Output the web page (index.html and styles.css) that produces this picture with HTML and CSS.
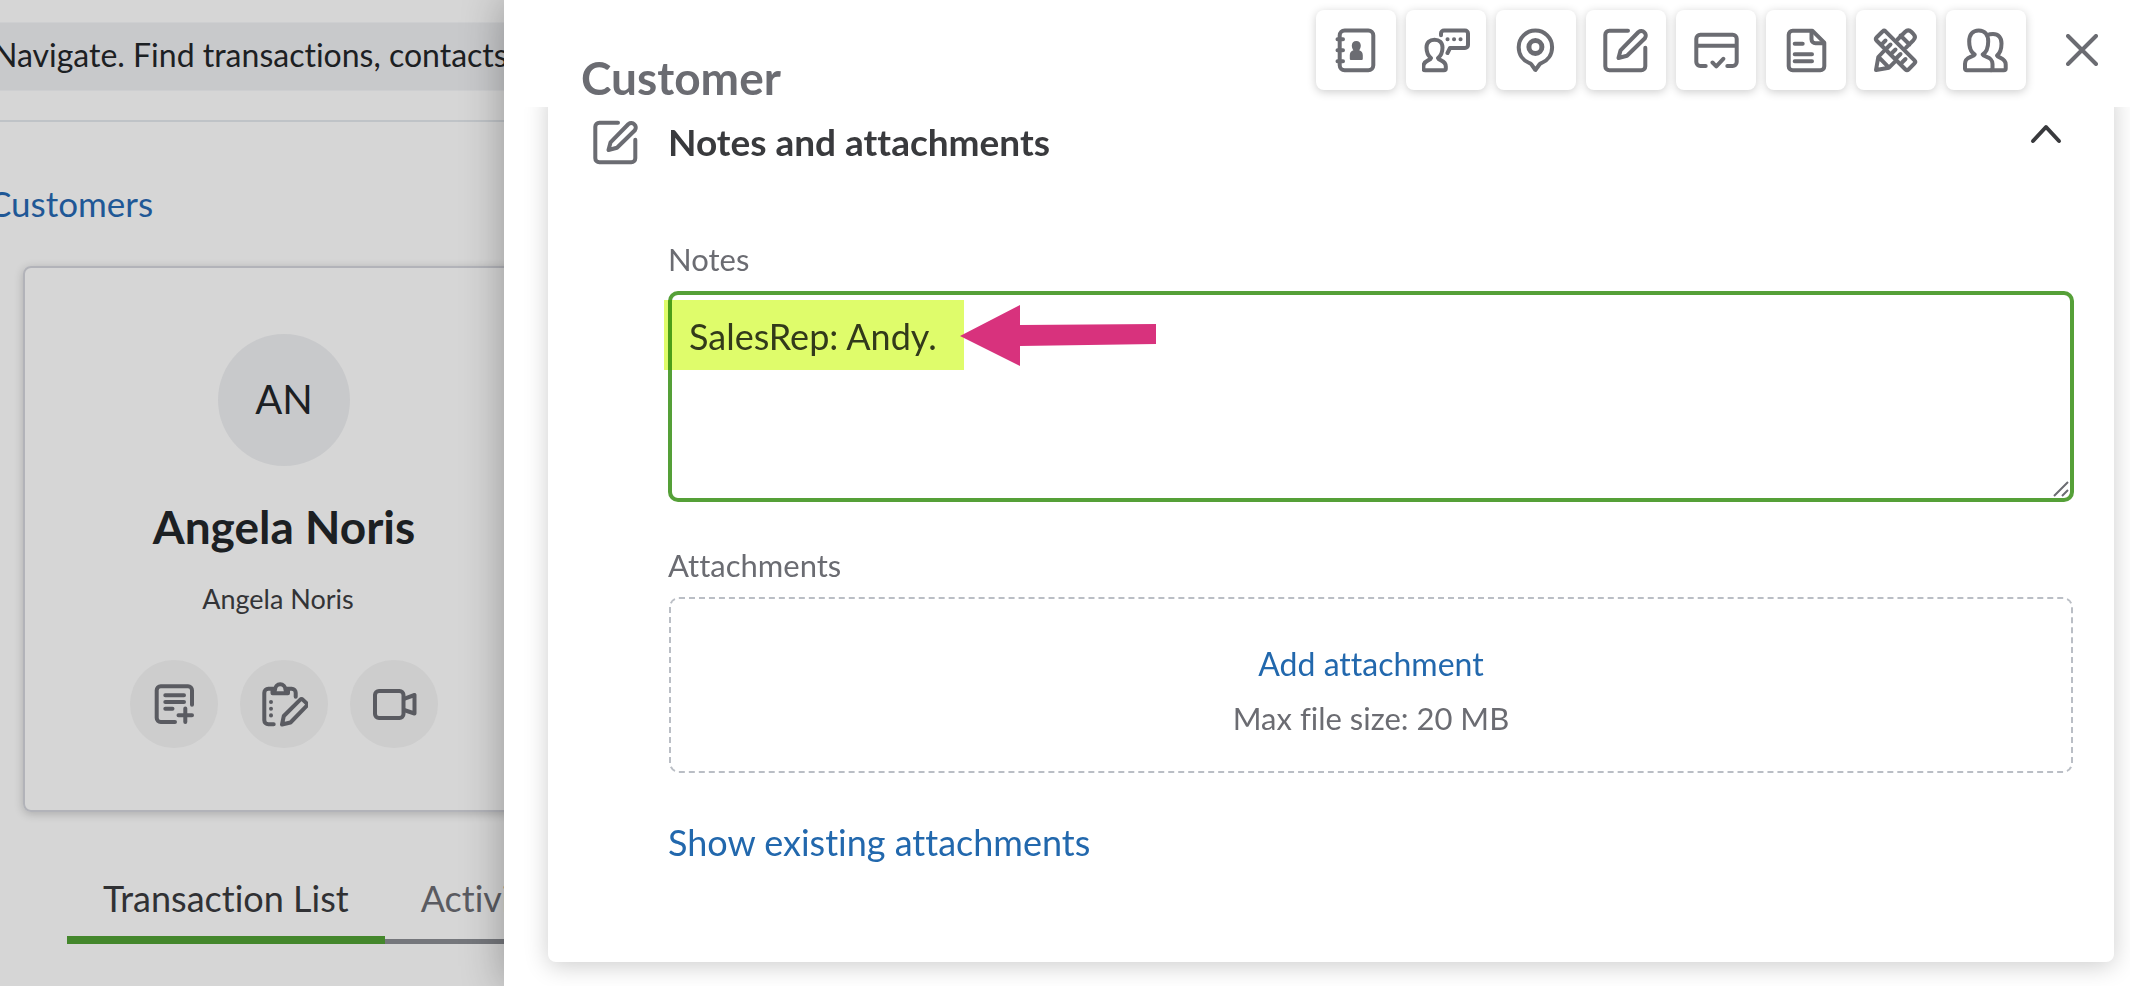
FILE: index.html
```html
<!DOCTYPE html>
<html lang="en">
<head>
    <meta charset="UTF-8">
    <meta name="viewport" content="width=device-width, initial-scale=1.0">
    <title>Customer</title>
    <link rel="stylesheet" href="styles.css">
</head>
<body>
    <!-- shared icons -->
    <svg class="sprite" aria-hidden="true">
        <symbol id="icon-edit" viewBox="0 0 48 48">
            <path d="M26 4.700H7.300a4 4 0 0 0-4 4v31.600a4 4 0 0 0 4 4h32a4 4 0 0 0 4-4V21.700"/>
            <path d="M16.500 32l2-7.600L36.500 6a4.500 4.500 0 0 1 6.400 6.200L25 29.700z"/>
        </symbol>
    </svg>

    <div class="app">
        <header class="topbar">
            <input class="search" type="search" aria-label="Search" placeholder="Navigate. Find transactions, contacts, help, reports">
        </header>

        <a class="breadcrumb" href="#">Customers</a>

        <section class="profile">
            <div class="avatar">AN</div>
            <h1 class="profile-name">Angela Noris</h1>
            <p class="profile-company">Angela Noris</p>
            <div class="profile-actions">
                <button class="round-btn" aria-label="Add note">
                    <svg class="icon" viewBox="0 0 48 48">
                        <path d="M42 24.700V10.300a4 4 0 0 0-4-4H10.700a4 4 0 0 0-4 4V38a4 4 0 0 0 4 4H25"/>
                        <path d="M15.300 15.300H34M15.300 22H34M15.300 28.700h7.200M35.300 28.500V42M28.500 35.300H42"/>
                    </svg>
                </button>
                <button class="round-btn" aria-label="Edit tasks">
                    <svg class="icon" viewBox="0 0 48 48">
                        <path d="M13.700 44.300H8.300a4 4 0 0 1-4-4V12.700a4 4 0 0 1 4-4H13M27 8.700h4.700a4 4 0 0 1 4 4v4"/>
                        <path d="M12.500 13.300H28V10h-2.500c0-3.500-2.500-5.800-5.300-5.800S15 6.500 15 10h-2.500z"/>
                        <path d="M11 22v.1M11 28.700v.1M11 35.300v.1"/>
                        <path d="M22 44.500l1.800-8.500 16.200-16.200c1-1 2-1 3 0l3.400 3.400c1 1 1 2 0 3L30.500 42.500z"/>
                    </svg>
                </button>
                <button class="round-btn" aria-label="Video call">
                    <svg class="icon" viewBox="0 0 48 48">
                        <rect x="5" y="11" width="28.500" height="27" rx="4"/>
                        <path d="M34 18.800l10.500-3.800v18.500L34 30"/>
                    </svg>
                </button>
            </div>
        </section>

        <nav class="tabs">
            <button class="tab active">Transaction List</button>
            <button class="tab">Activity Feed</button>
        </nav>
    </div>

    <aside class="drawer">
        <header class="drawer-header">
            <h2 class="drawer-title">Customer</h2>
            <div class="toolbar">
                <button class="tool" aria-label="Name and contact">
                    <svg class="icon" viewBox="0 0 48 48">
                        <rect x="7.700" y="4.500" width="33.600" height="39.800" rx="5"/>
                        <path d="M5.500 13.300h5.500M5.500 24.300h5.500M5.500 35.300h5.500"/>
                        <path class="solid" d="M24.300 15c2.800 0 4.500 1.900 4.500 4.600 0 1.800-.6 3.500-1.600 4.600 2.300.6 3.600 2.300 3.600 5v3.300c0 1-.5 1.500-1.500 1.500h-10c-1 0-1.500-.5-1.500-1.500v-3.300c0-2.700 1.300-4.400 3.600-5-1-1.100-1.600-2.800-1.600-4.600 0-2.700 1.700-4.600 4.500-4.600z"/>
                    </svg>
                </button>
                <button class="tool" aria-label="Communication">
                    <svg class="icon" viewBox="0 0 48 48">
                        <path d="M9 32c-3.400-2.600-4.500-6-4.500-10.500 0-5 3.200-7.800 8-7.800s8 2.800 8 7.800c0 4.500-1.100 7.900-4.500 10.500 1 3 7.800 2.200 7.800 8.500v2c0 1.200-.6 1.800-1.800 1.800H3.200c-1.200 0-1.800-.6-1.800-1.800v-2C1.400 34.200 8 35 9 32z"/>
                        <path d="M19 9.300V7.500a3 3 0 0 1 3-3h21a3 3 0 0 1 3 3V19a3 3 0 0 1-3 3H28l-2.500 5"/>
                        <path d="M25.500 13.300h.1M32 13.300h.1M38.500 13.300h.1"/>
                    </svg>
                </button>
                <button class="tool" aria-label="Addresses">
                    <svg class="icon" viewBox="0 0 48 48">
                        <path d="M23.400 44l-4.200-5.800c-.6-.8-1.200-.9-2-1.200C11 34.500 6.700 28.500 6.700 21.200a16.700 16.700 0 0 1 33.400 0c0 7.300-4.300 13.300-10.500 15.800-.8.300-1.400.4-2 1.200z"/>
                        <circle class="bold" cx="23.400" cy="21" r="6.500"/>
                    </svg>
                </button>
                <button class="tool" aria-label="Notes and attachments">
                    <svg class="icon"><use href="#icon-edit"/></svg>
                </button>
                <button class="tool" aria-label="Payments">
                    <svg class="icon" viewBox="0 0 48 48">
                        <path d="M13.700 40H8.300a4 4 0 0 1-4-4V12.700a4 4 0 0 1 4-4h32.400a4 4 0 0 1 4 4V36a4 4 0 0 1-4 4h-5.400M5 19.700h39"/>
                        <path d="M20.500 36.500l3.800 3.800 7-7.500"/>
                    </svg>
                </button>
                <button class="tool" aria-label="Additional info">
                    <svg class="icon" viewBox="0 0 48 48">
                        <path d="M30.300 4.700H10.700a4 4 0 0 0-4 4v31.600a4 4 0 0 0 4 4h27.600a4 4 0 0 0 4-4V16.700z"/>
                        <path d="M29.500 5v8.300a4 4 0 0 0 4 4h8.500M12.700 17.700h8M12.700 28.300H30M12.700 35.300H30"/>
                    </svg>
                </button>
                <button class="tool" aria-label="Custom fields">
                    <svg class="icon" viewBox="0 0 48 48">
                        <path d="M10.800 5.300l-6.300 6.200c-1 1-1 2 0 3l29 29c1 1 2 1 3 0l6-6.200c1-1 1-2 0-3l-29-29c-1-.9-1.800-.9-2.700 0z"/>
                        <path d="M13.500 14.500l-3.300 3.300M18.500 18.500l-4.500 4.500M23.500 23.500L20 27M28.500 28l-4.500 4.500M33.500 33L30 36.500"/>
                        <path d="M25.500 13.500L33 6c2-1.900 4.500-1.900 6.500 0l1.800 1.800c2 2 2 4.500 0 6.500L34 21.700M28.500 9.500l9 9M11.500 25.500L6.300 31 4 44l13-2.300 5.500-5.500M7 31.500l9.300 9.300"/>
                    </svg>
                </button>
                <button class="tool" aria-label="Sub-customers">
                    <svg class="icon" viewBox="0 0 48 48">
                        <path d="M12.700 28.500c-4-2.500-5.500-6.500-5.500-13 0-7 3.500-11 9.500-11s9.500 4 9.500 11c0 6.500-1.500 10.500-5.500 13 1 3 9.800 1.500 9.800 9.500v4.500c0 1.200-.6 1.800-1.800 1.800H4.800c-1.200 0-1.800-.6-1.800-1.800V38c0-8 8.700-6.500 9.700-9.500z"/>
                        <path d="M25.500 9c1.500-.7 3.500-1 5.500-1 5.500 0 8.500 3.500 8.500 9.500 0 6-1.300 9.500-4.500 12 1 2.700 8.700 2.200 8.700 9v4c0 1.200-.6 1.800-1.800 1.800H29"/>
                    </svg>
                </button>
            </div>
            <button class="close" aria-label="Close">
                <svg class="icon-small" viewBox="0 0 32 32"><path d="M2 2l28 28M30 2L2 30"/></svg>
            </button>
        </header>

        <div class="drawer-body">
            <section class="card">
                <div class="card-header">
                    <svg class="icon"><use href="#icon-edit"/></svg>
                    <h3 class="card-title">Notes and attachments</h3>
                    <button class="collapse" aria-label="Collapse section">
                        <svg class="icon-small" viewBox="0 0 32 32"><path d="M3 23L16 9l13 14"/></svg>
                    </button>
                </div>

                <div class="card-content">
                    <label class="label" for="notes">Notes</label>
                    <div class="notes-wrap">
                        <textarea class="notes" id="notes" spellcheck="false">SalesRep: Andy.</textarea>
                        <div class="highlight"></div>
                        <svg class="arrow" viewBox="0 0 196 62" aria-hidden="true">
                            <polygon points="0,31 60,0 60,20 196,19 196,39 60,41 60,61"/>
                        </svg>
                        <svg class="grip" viewBox="0 0 16 16" aria-hidden="true">
                            <path d="M1 15L15 1M9 15l6-6"/>
                        </svg>
                    </div>

                    <p class="label">Attachments</p>
                    <div class="dropzone">
                        <button class="link-btn">Add attachment</button>
                        <span class="hint">Max file size: 20 MB</span>
                    </div>

                    <a class="show-link" href="#">Show existing attachments</a>
                </div>
            </section>
        </div>
    </aside>
</body>
</html>
```

FILE: styles.css
```css
:root {
    --blue: #2268ad;
    --blue-dim: #1f5896;
    --green: #55a038;
    --green-dim: #44872c;
    --gray: #6b6c72;
    --gray-dim: #5a5b61;
    --dark: #393a3d;
    --page: #d6d6d6;
}

* {
    margin: 0;
    padding: 0;
    box-sizing: border-box;
    font-family: Lato, 'Open Sans', sans-serif;
}

body {
    background: var(--page);
    min-height: 100vh;
    overflow: hidden;
    font-variant-ligatures: none;
}

button {
    border: none;
    background: none;
    cursor: pointer;
    font-variant-ligatures: none;
}

a {
    text-decoration: none;
}

.sprite {
    display: none;
}

.icon,
.icon-small {
    display: block;
    flex: none;
    width: 48px;
    height: 48px;
    fill: none;
    stroke: var(--gray);
    stroke-width: 4;
    stroke-linecap: round;
    stroke-linejoin: round;
}

.icon-small {
    width: 32px;
    height: 32px;
}

.icon .solid {
    fill: var(--gray);
    stroke: none;
}

.icon .bold {
    stroke-width: 5;
}

/* Page behind the drawer */
.app {
    width: 585px;
    margin-left: -40px;
}

.topbar {
    padding: 22px 0 29px;
    border-bottom: 2px solid #bfc3c7;
}

.search {
    display: block;
    width: 100%;
    height: 69px;
    padding: 0 0 4px 32px;
    border: 1px solid #cecfd1;
    background: #c8c9cb;
    font-size: 32px;
    font-variant-ligatures: none;
    outline: none;
}

.search::placeholder {
    color: #1c2023;
    opacity: 1;
}

.breadcrumb {
    display: block;
    margin: 61px 0 43px 28px;
    font-size: 35px;
    line-height: 40px;
    color: var(--blue-dim);
}

.profile {
    display: flex;
    flex-direction: column;
    align-items: center;
    margin-left: 63px;
    padding: 66px 0 62px;
    border: 2px solid #b2b3b9;
    border-radius: 8px;
    box-shadow: 0 2px 10px rgba(0, 0, 0, 0.2);
}

.avatar {
    width: 132px;
    height: 132px;
    border-radius: 50%;
    background: #c8c9cb;
    color: #1c2023;
    font-size: 40px;
    line-height: 130px;
    text-align: center;
}

.profile-name {
    margin-top: 35px;
    font-size: 46px;
    line-height: 52px;
    color: #1c2023;
}

.profile-company {
    margin-top: 30px;
    padding-right: 12px;
    font-size: 27px;
    line-height: 32px;
    color: #333437;
}

.profile-actions {
    display: flex;
    gap: 22px;
    margin-top: 45px;
}

.round-btn {
    display: flex;
    align-items: center;
    justify-content: center;
    width: 88px;
    height: 88px;
    border-radius: 50%;
    background: #cdcdcd;
}

.round-btn .icon {
    stroke: var(--gray-dim);
}

.tabs {
    display: flex;
    margin: 64px 0 0 107px;
    box-shadow: inset 0 -5px #75777c;
}

.tab {
    padding: 0 36px 16px;
    border-bottom: 8px solid transparent;
    font-size: 36px;
    line-height: 44px;
    white-space: nowrap;
    color: var(--gray-dim);
}

.tab.active {
    border-color: var(--green-dim);
    color: #303134;
}

/* Drawer */
.drawer {
    position: fixed;
    top: 0;
    right: 0;
    bottom: 0;
    left: 504px;
    display: flex;
    flex-direction: column;
    background: #fff;
    box-shadow: 0 0 40px rgba(0, 0, 0, 0.3);
}

.drawer-header {
    display: flex;
    align-items: flex-start;
    min-height: 107px;
    padding: 10px 32px 0 77px;
}

.drawer-title {
    margin: 43px auto 0 0;
    font-size: 46px;
    line-height: 50px;
    color: var(--gray);
}

.toolbar {
    display: flex;
    gap: 10px;
}

.tool {
    display: flex;
    align-items: center;
    justify-content: center;
    width: 80px;
    height: 80px;
    border-radius: 8px;
    background: #fff;
    box-shadow: 0 2px 10px rgba(0, 0, 0, 0.2);
}

.close {
    margin: 24px 0 0 40px;
}

.drawer-body {
    flex: 1;
    padding: 0 16px 24px 44px;
    overflow: hidden;
}

.card {
    margin-top: -20px;
    padding: 31px 40px 98px;
    border-radius: 8px;
    background: #fff;
    box-shadow: 0 4px 24px rgba(0, 0, 0, 0.2);
}

.card-header {
    display: flex;
    align-items: center;
    gap: 28px;
    padding-left: 4px;
}

.card-title {
    font-size: 37px;
    line-height: 48px;
    color: var(--dark);
}

.collapse {
    align-self: flex-start;
    margin: 0 12px 0 auto;
}

.collapse .icon-small {
    stroke: var(--dark);
}

.card-content {
    padding: 73px 0 0 80px;
}

.label {
    display: block;
    margin-bottom: 12px;
    font-size: 31px;
    line-height: 40px;
    color: var(--gray);
}

.notes-wrap {
    position: relative;
    margin-bottom: 43px;
}

.notes {
    display: block;
    width: 100%;
    height: 211px;
    padding: 19px 17px;
    border: 4px solid var(--green);
    border-radius: 10px;
    outline: none;
    resize: none;
    font-size: 36px;
    line-height: 44px;
    color: var(--dark);
}

/* Marker strokes over the note */
.highlight {
    position: absolute;
    top: 9px;
    left: -4px;
    width: 300px;
    height: 70px;
    background: #dffc6b;
    mix-blend-mode: multiply;
}

.arrow {
    position: absolute;
    top: 14px;
    left: 292px;
    width: 196px;
    height: 62px;
    fill: #d8327d;
}

.grip {
    position: absolute;
    right: 5px;
    bottom: 5px;
    width: 16px;
    height: 16px;
    fill: none;
    stroke: var(--gray);
    stroke-width: 2;
}

.dropzone {
    display: flex;
    flex-direction: column;
    align-items: center;
    gap: 14px;
    margin: 0 1px;
    padding: 45px 0 33px;
    border: 2px dashed #babec5;
    border-radius: 10px;
}

.link-btn,
.hint {
    font-size: 31px;
    line-height: 40px;
    color: var(--gray);
}

.link-btn {
    font-size: 32px;
    color: var(--blue);
}

.show-link {
    display: inline-block;
    margin-top: 47px;
    font-size: 36px;
    line-height: 44px;
    color: var(--blue);
}
```
